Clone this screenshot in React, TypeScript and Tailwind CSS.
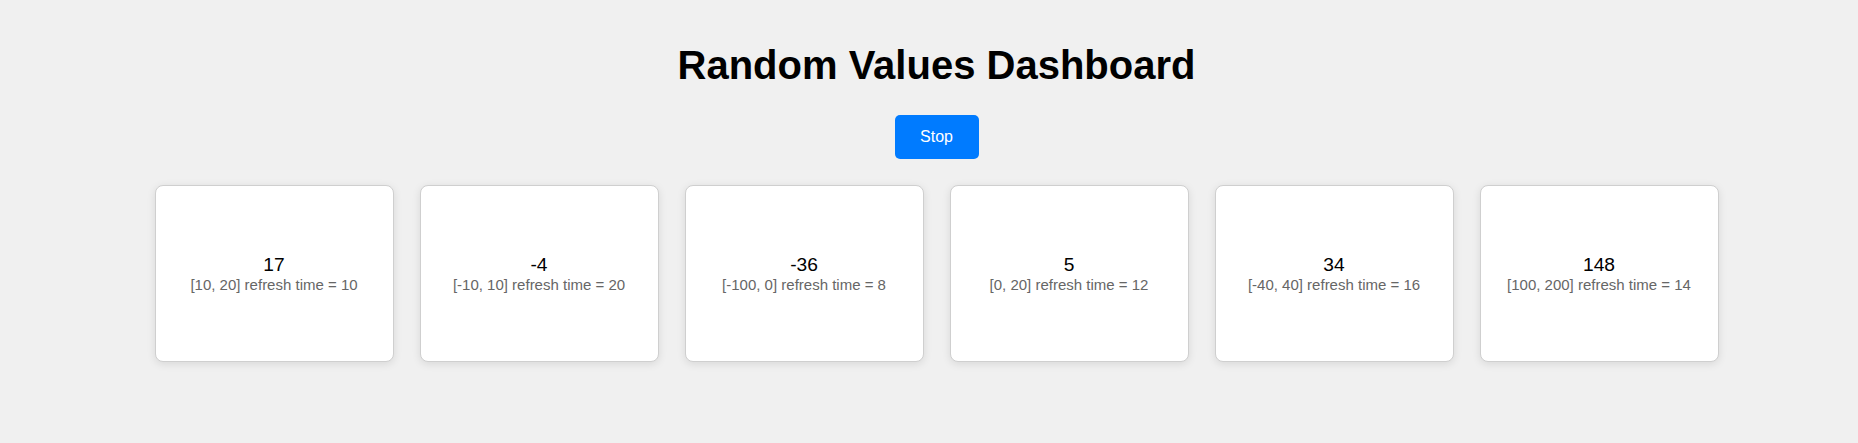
const cards = [
  { value: 17, range: '[10, 20]', refresh: 10 },
  { value: -4, range: '[-10, 10]', refresh: 20 },
  { value: -36, range: '[-100, 0]', refresh: 8 },
  { value: 5, range: '[0, 20]', refresh: 12 },
  { value: 34, range: '[-40, 40]', refresh: 16 },
  { value: 148, range: '[100, 200]', refresh: 14 },
];

function ValueCard({ value, range, refresh }: { value: number; range: string; refresh: number }) {
  return (
    <div className="flex h-[177px] w-[239px] flex-col items-center justify-center rounded-lg border border-[#cfcfcf] bg-white shadow-[0_2px_8px_rgba(0,0,0,0.1)]">
      <div className="text-[19.2px] leading-[22px] text-black">{value}</div>
      <div className="text-[15px] leading-[17px] text-[#666]">
        {range} refresh time = {refresh}
      </div>
    </div>
  );
}

export default function App() {
  return (
    <div className="min-h-screen bg-[#f0f0f0] font-['Liberation_Sans',Arial,sans-serif]">
      <div className="flex flex-col items-center pl-[15px] pt-[42px]">
        <h1 className="text-[40px] font-bold leading-[46px] text-black">Random Values Dashboard</h1>
        <button className="mt-[27px] h-[44px] w-[84px] rounded-[5px] bg-[#007bff] text-[16px] text-white">
          Stop
        </button>
        <div className="mt-[26px] flex gap-[26px]">
          {cards.map((c) => (
            <ValueCard key={c.range} {...c} />
          ))}
        </div>
      </div>
    </div>
  );
}
